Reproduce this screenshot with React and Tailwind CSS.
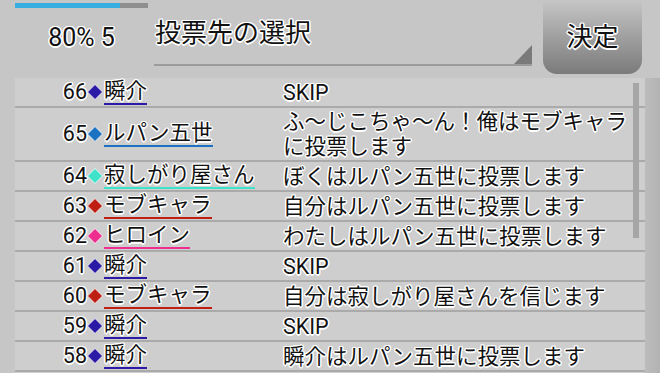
import React from "react";

const OUT =
  "[text-shadow:1px_0_0_#fff,-1px_0_0_#fff,0_1px_0_#fff,0_-1px_0_#fff,1px_1px_0_#fff,-1px_-1px_0_#fff,1px_-1px_0_#fff,-1px_1px_0_#fff,1.5px_0_0.5px_#fff,-1.5px_0_0.5px_#fff,0_1.5px_0.5px_#fff,0_-1.5px_0.5px_#fff]";

const C = {
  shun: "#2b1aa6",
  lupin: "#1b72c2",
  sabi: "#3fe3c9",
  mob: "#bf1f12",
  hero: "#ee2f8f",
};

const rows = [
  { n: 66, name: "瞬介", c: C.shun, msg: "SKIP" },
  { n: 65, name: "ルパン五世", c: C.lupin, msg: "ふ〜じこちゃ〜ん！俺はモブキャラ\nに投票します" },
  { n: 64, name: "寂しがり屋さん", c: C.sabi, msg: "ぼくはルパン五世に投票します" },
  { n: 63, name: "モブキャラ", c: C.mob, msg: "自分はルパン五世に投票します" },
  { n: 62, name: "ヒロイン", c: C.hero, msg: "わたしはルパン五世に投票します" },
  { n: 61, name: "瞬介", c: C.shun, msg: "SKIP" },
  { n: 60, name: "モブキャラ", c: C.mob, msg: "自分は寂しがり屋さんを信じます" },
  { n: 59, name: "瞬介", c: C.shun, msg: "SKIP" },
  { n: 58, name: "瞬介", c: C.shun, msg: "瞬介はルパン五世に投票します" },
];

function Diamond({ color }) {
  return (
    <svg width="16" height="16" viewBox="0 0 16 16" className="shrink-0">
      <polygon points="8,0.5 15.5,8 8,15.5 0.5,8" fill={color} stroke="#fff" strokeWidth="0.8" />
    </svg>
  );
}

export default function App() {
  return (
    <div
      className={`w-[660px] h-[373px] overflow-hidden bg-[#c6c6c6] text-[#111] font-['Roboto','Noto_Sans_CJK_JP',sans-serif] ${OUT}`}
    >
      {/* header */}
      <div className="flex h-[78px]">
        <div className="ml-[15px] w-[133px] flex flex-col pt-[3px]">
          <div className="flex h-[5px]">
            <div className="w-[105px] bg-[#39aee0]" />
            <div className="flex-1 bg-[#8f8f8f]" />
          </div>
          <div className="mt-[15px] text-center text-[25px] leading-[30px]">80% 5</div>
        </div>
        <div className="ml-[6px] w-[378px] h-[66px] relative border-b-2 border-[#9c9c9c]">
          <div className="pt-[17px] pl-[1px] text-[26px] leading-[32px]">投票先の選択</div>
          <svg width="18" height="19" viewBox="0 0 18 19" className="absolute right-0 bottom-0">
            <polygon points="18,0 18,19 0,19" fill="#7a7a7a" />
          </svg>
        </div>
        <div className="ml-[11px] w-[99px] h-[74px] rounded-b-[14px] bg-linear-to-b from-[#c6c6c6] to-[#7b7b7b] flex items-center justify-center">
          <span className="text-[26px] leading-[32px] -mt-[1px]">決定</span>
        </div>
        <div className="flex-1" />
      </div>

      {/* list */}
      <div className="flex">
        <div className="ml-[15px] w-[630px] h-[295px] bg-[#cecece] relative overflow-hidden">
          {rows.map((r) => (
            <div key={r.n} className="flex items-center border-b-2 border-[#aaaaaa] py-[1px]">
              <div className="w-[268px] shrink-0 flex items-center">
                <span className="w-[72px] text-right text-[21.5px] leading-[24px]">{r.n}</span>
                <Diamond color={r.c} />
                <span
                  className="ml-[1px] text-[21.5px] leading-[24px] border-b-2 whitespace-nowrap"
                  style={{ borderColor: r.c }}
                >
                  {r.name}
                </span>
              </div>
              <div className="text-[21.5px] leading-[25px] whitespace-pre">{r.msg}</div>
            </div>
          ))}
          <div className="absolute left-[618px] top-[5px] w-[6px] h-[155px] bg-[#a6a6a6]" />
        </div>
        <div className="flex-1 h-[295px] bg-linear-to-r from-[#bcbcbc] to-[#b3b3b3]" />
      </div>
    </div>
  );
}
